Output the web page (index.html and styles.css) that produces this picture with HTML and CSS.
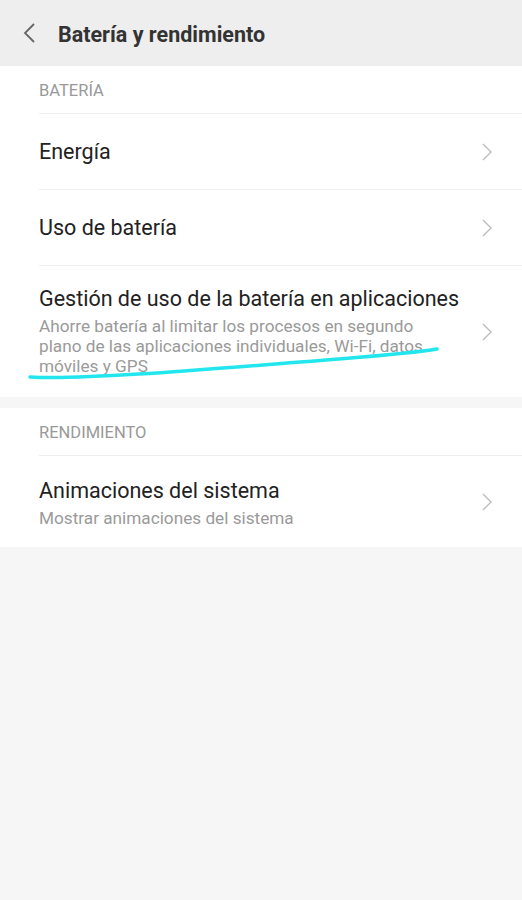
FILE: index.html
```html
<!DOCTYPE html>
<html lang="es">
<head>
  <meta charset="UTF-8" />
  <meta name="viewport" content="width=device-width, initial-scale=1.0"/>
  <title>Batería y rendimiento</title>
  <link rel="stylesheet" href="styles.css">
</head>
<body>

  <header class="topbar">
    <svg class="back" width="14" height="20" viewBox="0 0 14 20">
      <path d="M12 1 L3 10 L12 19" fill="none" stroke="#666" stroke-width="1.8"/>
    </svg>
    <h1>Batería y rendimiento</h1>
  </header>

  <section class="group">
    <div class="group-label">BATERÍA</div>
    <div class="row">
      <div class="row-text"><div class="row-title">Energía</div></div>
      <svg class="chev" width="10" height="18" viewBox="0 0 10 18"><path d="M1 1 L9 9 L1 17" fill="none" stroke="#bdbdbd" stroke-width="1.4"/></svg>
    </div>
    <div class="row">
      <div class="row-text"><div class="row-title">Uso de batería</div></div>
      <svg class="chev" width="10" height="18" viewBox="0 0 10 18"><path d="M1 1 L9 9 L1 17" fill="none" stroke="#bdbdbd" stroke-width="1.4"/></svg>
    </div>
    <div class="row row-tall">
      <div class="row-text">
        <div class="row-title">Gestión de uso de la batería en aplicaciones</div>
        <div class="row-sub">Ahorre batería al limitar los procesos en segundo plano de las aplicaciones individuales, Wi-Fi, datos móviles y GPS</div>
      </div>
      <svg class="chev" width="10" height="18" viewBox="0 0 10 18"><path d="M1 1 L9 9 L1 17" fill="none" stroke="#bdbdbd" stroke-width="1.4"/></svg>
    </div>
  </section>

  <section class="group">
    <div class="group-label">RENDIMIENTO</div>
    <div class="row row-sub-only">
      <div class="row-text">
        <div class="row-title">Animaciones del sistema</div>
        <div class="row-sub">Mostrar animaciones del sistema</div>
      </div>
      <svg class="chev" width="10" height="18" viewBox="0 0 10 18"><path d="M1 1 L9 9 L1 17" fill="none" stroke="#bdbdbd" stroke-width="1.4"/></svg>
    </div>
  </section>

  <!-- hand-drawn marker stroke over the screenshot -->
  <svg class="marker" width="522" height="60" viewBox="0 0 522 60">
    <path d="M30 37 C 80 40, 200 30, 300 22 C 360 17, 410 14, 437 9" fill="none" stroke="#22e6ee" stroke-width="3.5" stroke-linecap="round"/>
  </svg>

</body>
</html>
```

FILE: styles.css
```css
* {
  box-sizing: border-box;
}

body {
  margin: 0;
  font-family: Roboto, 'Noto Sans', sans-serif;
  background: #f6f6f6;
  color: #222;
  min-height: 100vh;
  position: relative;
}

.topbar {
  height: 66px;
  background: #eeeeee;
  display: flex;
  align-items: center;
  padding-left: 22px;
}

.back {
  margin-right: 22px;
  margin-top: -1px;
}

.topbar h1 {
  margin: 0;
  font-size: 21.5px;
  font-weight: 700;
  color: #333;
  margin-top: 2px;
}

.group {
  background: #fff;
  padding-left: 39px;
  margin-bottom: 11px;
}

.group-label {
  height: 48px;
  display: flex;
  align-items: center;
  font-size: 16.5px;
  color: #999;
  border-bottom: 1px solid #efefef;
  padding-top: 2px;
}

.row {
  height: 76px;
  display: flex;
  align-items: center;
  padding-right: 30px;
  border-bottom: 1px solid #efefef;
}

.row:last-child {
  border-bottom: none;
}

.row-tall {
  height: 131px;
}

.row-sub-only {
  height: 91px;
}

.row-text {
  flex: 1;
}

.row-title {
  font-size: 21.5px;
  color: #222;
}

.row-tall .row-title {
  margin-top: -2px;
}

.row-sub {
  font-size: 17.2px;
  line-height: 20px;
  color: #9a9a9a;
  margin-top: 5px;
  max-width: 410px;
}

.row-sub-only .row-sub {
  margin-top: 5px;
}

.row-sub-only .row-text {
  padding-top: 3px;
}

.chev {
  margin-left: 10px;
}

.marker {
  position: absolute;
  left: 0;
  top: 340px;
}
```
